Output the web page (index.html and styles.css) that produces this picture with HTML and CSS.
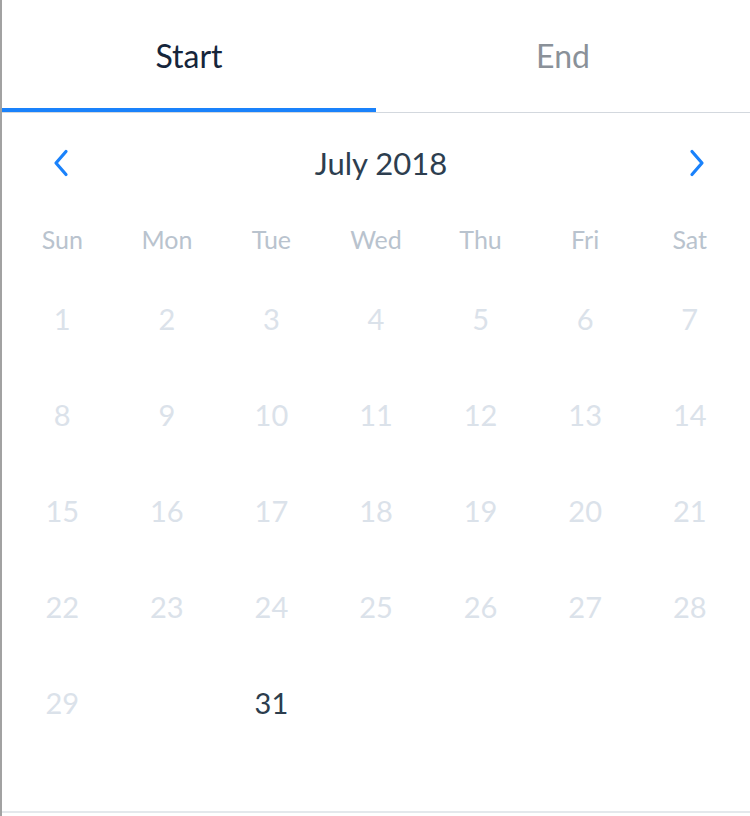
FILE: index.html
```html
<!DOCTYPE html>
<html lang="en">
<head>
<meta charset="utf-8">
<title>Date range</title>
<link rel="stylesheet" href="styles.css">
</head>
<body>
<div class="picker">
  <div class="tabs">
    <div class="tab tab--active">Start</div>
    <div class="tab">End</div>
  </div>

  <div class="month-nav">
    <button class="nav-btn" aria-label="Previous month">
      <svg width="18" height="28" viewBox="0 0 18 28"><path d="M14 2.5 L4 14 L14 25.5" fill="none" stroke="#1a82fb" stroke-width="3.2" stroke-linecap="round" stroke-linejoin="round"/></svg>
    </button>
    <div class="month-title">July 2018</div>
    <button class="nav-btn" aria-label="Next month">
      <svg width="18" height="28" viewBox="0 0 18 28"><path d="M4 2.5 L14 14 L4 25.5" fill="none" stroke="#1a82fb" stroke-width="3.2" stroke-linecap="round" stroke-linejoin="round"/></svg>
    </button>
  </div>

  <div class="week grid">
    <span>Sun</span><span>Mon</span><span>Tue</span><span>Wed</span><span>Thu</span><span>Fri</span><span>Sat</span>
  </div>

  <div class="days grid">
    <span class="day">1</span><span class="day">2</span><span class="day">3</span><span class="day">4</span><span class="day">5</span><span class="day">6</span><span class="day">7</span>
    <span class="day">8</span><span class="day">9</span><span class="day">10</span><span class="day">11</span><span class="day">12</span><span class="day">13</span><span class="day">14</span>
    <span class="day">15</span><span class="day">16</span><span class="day">17</span><span class="day">18</span><span class="day">19</span><span class="day">20</span><span class="day">21</span>
    <span class="day">22</span><span class="day">23</span><span class="day">24</span><span class="day">25</span><span class="day">26</span><span class="day">27</span><span class="day">28</span>
    <span class="day">29</span><span class="day"></span><span class="day day--available">31</span><span class="day"></span><span class="day"></span><span class="day"></span><span class="day"></span>
  </div>
</div>
</body>
</html>
```

FILE: styles.css
```css
* { box-sizing: border-box; }

html, body {
  margin: 0;
  padding: 0;
  background: #ffffff;
}

body {
  font-family: Lato, "Open Sans", "Liberation Sans", sans-serif;
  width: 750px;
  height: 816px;
  overflow: hidden;
}

.picker {
  height: 816px;
  border-left: 2px solid #a2a2a2;
  display: flex;
  flex-direction: column;
}

/* Start / End tabs */
.tabs {
  display: flex;
  height: 113px;
  border-bottom: 1px solid #d3d8de;
}

.tab {
  flex: 1;
  display: flex;
  align-items: center;
  justify-content: center;
  padding-bottom: 2px;
  font-size: 32px;
  color: #8a9199;
  position: relative;
}

.tab--active {
  color: #15253b;
}

.tab--active::after {
  content: "";
  position: absolute;
  left: 0;
  right: 0;
  bottom: 0;
  height: 4px;
  background: #1a82fb;
}

/* Month header */
.month-nav {
  height: 100px;
  display: flex;
  align-items: center;
  justify-content: space-between;
  padding: 0 37px 0 43px;
}

.nav-btn {
  border: 0;
  background: none;
  padding: 0;
  width: 32px;
  height: 40px;
  display: flex;
  align-items: center;
  justify-content: center;
  cursor: pointer;
}

.month-title {
  font-size: 31px;
  color: #2d3e4f;
  padding-left: 4px;
}

/* Weekday header + day grid */
.grid {
  display: grid;
  grid-template-columns: repeat(7, 1fr);
  padding: 0 8px;
  text-align: center;
}

.week {
  height: 52px;
  align-items: center;
  font-size: 25px;
  color: #b9c3ce;
}

.days {
  padding-top: 5px;
  grid-auto-rows: 96px;
  align-items: center;
  font-size: 29px;
  color: #dbe2ea;
  flex: 1;
  align-content: start;
  border-bottom: 2px solid #e4e8ec;
  margin-bottom: 3px;
}

.day--available {
  color: #2c3d4d;
}
```
